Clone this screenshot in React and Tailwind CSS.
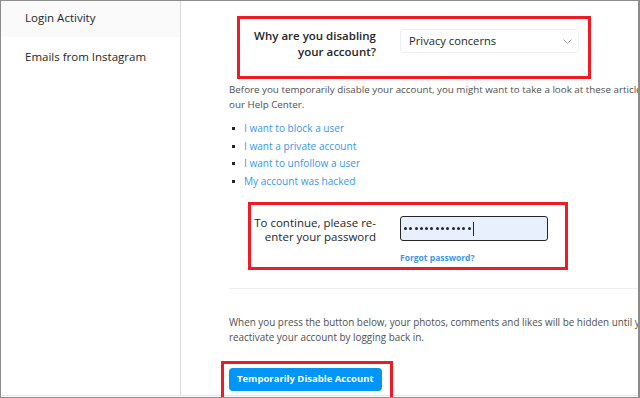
import React from 'react';

const font = { fontFamily: '"Segoe UI", "Open Sans", sans-serif' };

const links = [
  'I want to block a user',
  'I want a private account',
  'I want to unfollow a user',
  'My account was hacked',
];

const dots = Array.from({ length: 13 });

const Sidebar = () => (
  <div className="w-[180px] shrink-0 border-r border-[#dbdbdb] bg-white">
    <div className="h-[36px] bg-[#fafafa] pl-[24px] pt-[9px] text-[11.5px] leading-[16px] text-[#262626]">Login Activity</div>
    <div className="h-[40px] pl-[24px] pt-[12px] text-[11.5px] leading-[16px] text-[#262626]">Emails from Instagram</div>
  </div>
);

const App = () => {
  return (
    <div style={font} className="relative w-[640px] h-[398px] overflow-hidden bg-white border-t border-l border-r-2 border-b border-[#8c8c8c]">
      <div className="flex h-[395px] border-b border-[#e6e6e6]">
        <Sidebar />

        <div className="pl-[48px] w-[480px] shrink-0">
          {/* reason select */}
          <div className="flex items-start gap-[24px] pt-[27px]">
            <label className="w-[147px] text-right text-[11.5px] leading-[16px] font-semibold text-[#262626]">
              Why are you disabling your account?
            </label>
            <div className="mt-[1px] flex items-center justify-between w-[179px] h-[24px] border border-[#efefef] rounded-[3px] pl-[8px] pr-[6px] text-[11.2px] text-[#262626]">
              <span>Privacy concerns</span>
              <svg width="9" height="5" viewBox="0 0 9 5" fill="none" stroke="#a8a8a8" strokeWidth="1">
                <path d="M0.5 0.5 L4.5 4.5 L8.5 0.5" />
              </svg>
            </div>
          </div>

          <p className="mt-[22px] text-[9.8px] leading-[15px] text-[#4f4f4f] whitespace-nowrap">
            Before you temporarily disable your account, you might want to take a look at these articles in<br />
            our Help Center.
          </p>

          <ul className="mt-[8px] flex flex-col">
            {links.map((l) => (
              <li key={l} className="flex items-center h-[17.5px] text-[10.1px]">
                <span className="w-[3px] h-[3px] bg-[#262626] ml-[3px] mr-[9px]"></span>
                <span className="text-[#3897f0]">{l}</span>
              </li>
            ))}
          </ul>

          {/* password */}
          <div className="flex items-start gap-[24px] mt-[26px]">
            <label className="w-[147px] text-right text-[11.5px] leading-[14px] font-medium text-[#262626]">
              To continue, please re-enter your password
            </label>
            <div>
              <div className="flex items-center w-[148px] h-[25px] border border-[#262626] rounded-[3px] bg-[#e8f0fe] pl-[3px]">
                <div className="flex gap-[2.3px]">
                  {dots.map((_, i) => (
                    <span key={i} className="w-[3px] h-[3px] rounded-full bg-[#262626]"></span>
                  ))}
                </div>
                <span className="ml-[2px] w-[1px] h-[14px] bg-[#262626]"></span>
              </div>
              <div className="mt-[11px] text-[8.5px] leading-[12px] font-bold text-[#3897f0]">Forgot password?</div>
            </div>
          </div>

          <div className="mt-[24px] border-t border-[#efefef]"></div>

          <p className="mt-[26px] text-[9.9px] leading-[15px] text-[#4f4f4f] whitespace-nowrap">
            When you press the button below, your photos, comments and likes will be hidden until you<br />
            reactivate your account by logging back in.
          </p>

          <button className="mt-[23px] h-[23px] px-[8px] rounded-[4px] bg-[#0095f6] text-white text-[9.5px] font-bold">
            Temporarily Disable Account
          </button>
        </div>
      </div>

      {/* annotation boxes */}
      <div className="absolute left-[236px] top-[15px] w-[354px] h-[63px] border-[3px] border-[#ed1c24]"></div>
      <div className="absolute left-[247px] top-[201px] w-[320px] h-[68px] border-[3px] border-[#ed1c24]"></div>
      <div className="absolute left-[220px] top-[360px] w-[172px] h-[48px] border-[3px] border-[#ed1c24]"></div>
    </div>
  );
};

export default App;
